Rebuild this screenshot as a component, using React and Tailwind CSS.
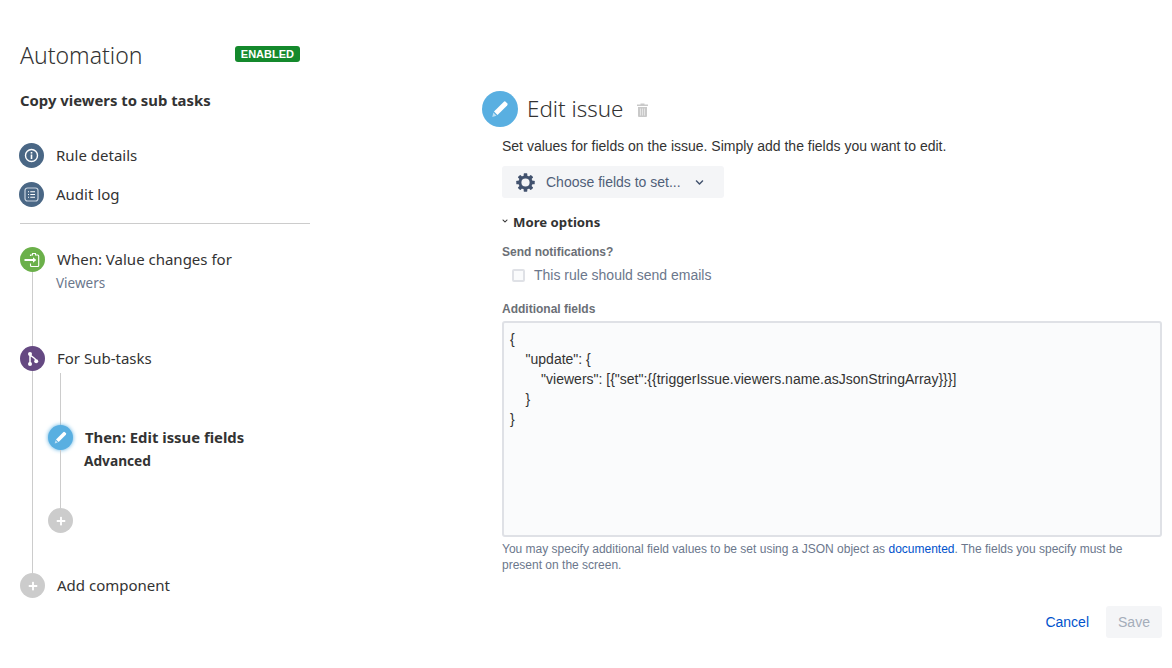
import React from 'react'
import { FaPlus, FaChevronDown } from 'react-icons/fa'

function Circle({ className, children }) {
  return (
    <div className={`w-[25px] h-[25px] rounded-full flex items-center justify-center shrink-0 text-white ${className}`}>
      {children}
    </div>
  )
}

function InfoIcon() {
  return (
    <svg width="15" height="15" viewBox="0 0 15 15" fill="none">
      <circle cx="7.5" cy="7.5" r="6" stroke="white" strokeWidth="1.4" />
      <rect x="6.7" y="6.5" width="1.6" height="4.5" fill="white" />
      <rect x="6.7" y="4" width="1.6" height="1.6" fill="white" />
    </svg>
  )
}

function LogIcon() {
  return (
    <svg width="15" height="15" viewBox="0 0 15 15" fill="none">
      <rect x="1" y="1" width="13" height="13" rx="2.5" stroke="#c9d3df" strokeWidth="1.2" />
      <path d="M4 4.8h1M6.3 4.8H11M4 7.5h1M6.3 7.5H11M4 10.2h1M6.3 10.2H11" stroke="white" strokeWidth="1.1" />
    </svg>
  )
}

function TriggerIcon() {
  return (
    <svg width="19" height="16" viewBox="0 0 19 16" fill="none">
      <path d="M7.5 4V3h2V1.5h3V3h2.2a1 1 0 0 1 1 1v9.5a1 1 0 0 1-1 1H8.5a1 1 0 0 1-1-1V11.5" stroke="white" strokeWidth="1.1" />
      <path d="M1.5 8h9" stroke="white" strokeWidth="2" />
      <path d="M10 5.2l3.3 2.8-3.3 2.8z" fill="white" />
    </svg>
  )
}

function BranchIcon() {
  return (
    <svg width="15" height="16" viewBox="0 0 15 16" fill="none">
      <path d="M5 3v10M5 3c0 3.2 5 2.5 6 6.5" stroke="white" strokeWidth="1.5" />
      <circle cx="5" cy="3" r="2" fill="white" />
      <circle cx="5" cy="13" r="2" fill="white" />
      <circle cx="11.2" cy="10.2" r="2" fill="white" />
    </svg>
  )
}

function PencilIcon({ size }) {
  return (
    <svg width={size} height={size} viewBox="0 0 16 16">
      <path d="M10.9 2.3a1.3 1.3 0 0 1 1.8 0l1 1a1.3 1.3 0 0 1 0 1.8L6 12.8 3.2 10z" fill="white" />
      <path d="M2.7 10.8l2.5 2.5-3.4 1z" fill="white" opacity="0.6" />
    </svg>
  )
}

function TrashIcon() {
  return (
    <svg width="13" height="14" viewBox="0 0 13 14">
      <path d="M4.5 1.5V.5h4v1h3.5V3H1V1.5z" fill="#c9c9c9" />
      <path d="M2 4h9v9a1 1 0 0 1-1 1H3a1 1 0 0 1-1-1z" fill="#c9c9c9" />
      <path d="M4.5 5.5v7M6.5 5.5v7M8.5 5.5v7" stroke="#e8e8e8" strokeWidth="0.9" />
    </svg>
  )
}

function GearIcon() {
  return (
    <svg width="19" height="19" viewBox="0 0 19 19" fill="none">
      <circle cx="9.5" cy="9.5" r="5.6" stroke="#42526e" strokeWidth="3" />
      {[0, 45, 90, 135, 180, 225, 270, 315].map((a) => (
        <rect key={a} x="7.7" y="0.3" width="3.6" height="3.4" rx="0.6" fill="#42526e" transform={`rotate(${a} 9.5 9.5)`} />
      ))}
    </svg>
  )
}

export default function App() {
  return (
    <div className="w-[1172px] h-[668px] bg-white flex overflow-hidden font-['Noto_Sans',sans-serif] text-[#333333]">
      {/* sidebar */}
      <div className="w-[482px] shrink-0 pl-5 pt-[40px]">
        <div className="w-[280px] flex items-center justify-between">
          <h1 className="text-[23px] leading-[30px] font-light text-[#333333]">Automation</h1>
          <span className="mb-[3px] h-4 px-[6px] rounded-[3px] bg-[#14892c] text-white text-[11px] leading-4 font-bold font-['Liberation_Sans',sans-serif]">ENABLED</span>
        </div>
        <div className="mt-[20px] text-[14.85px] leading-5 font-bold">Copy viewers to sub tasks</div>

        <div className="mt-[33px] w-[290px] border-b border-[#cccccc] pb-[16px] flex flex-col gap-[14px]">
          <div className="flex items-center gap-3 -ml-px">
            <Circle className="bg-[#4a6785]"><InfoIcon /></Circle>
            <span className="text-[15px] leading-[25px]">Rule details</span>
          </div>
          <div className="flex items-center gap-3 -ml-px">
            <Circle className="bg-[#4a6785]"><LogIcon /></Circle>
            <span className="text-[15px] leading-[25px]">Audit log</span>
          </div>
        </div>

        {/* timeline */}
        <div className="mt-[23px]">
          <div className="flex h-[99px]">
            <div className="w-[25px] flex flex-col items-center">
              <Circle className="bg-[#6bb04a]"><TriggerIcon /></Circle>
              <div className="w-px flex-1 bg-[#cccccc]" />
            </div>
            <div className="pl-3">
              <div className="text-[15px] leading-[25px]">When: Value changes for</div>
              <div className="mt-[1px] -ml-px text-[13.5px] leading-5 text-[#6b778c]">Viewers</div>
            </div>
          </div>

          <div className="flex h-[227px]">
            <div className="w-[25px] flex flex-col items-center">
              <Circle className="bg-[#654982]"><BranchIcon /></Circle>
              <div className="w-px flex-1 bg-[#cccccc]" />
            </div>
            <div>
              <div className="pl-3 text-[15px] leading-[25px]">For Sub-tasks</div>
              <div className="flex pl-[3px] pt-[2px]">
                <div className="w-[25px] flex flex-col items-center">
                  <div className="w-px h-[52px] bg-[#cccccc]" />
                  <Circle className="bg-[#59afe1] shadow-[0_0_4px_#59afe1]"><PencilIcon size={15} /></Circle>
                  <div className="w-px h-[58px] bg-[#cccccc]" />
                  <Circle className="bg-[#cccccc]"><FaPlus size={10} /></Circle>
                </div>
                <div className="pl-3 pt-[52px]">
                  <div className="text-[14.85px] leading-[25px] font-bold">Then: Edit issue fields</div>
                  <div className="-ml-px text-[13.7px] leading-5 font-bold mt-[1px]">Advanced</div>
                </div>
              </div>
            </div>
          </div>

          <div className="flex items-center">
            <Circle className="bg-[#cccccc]"><FaPlus size={10} /></Circle>
            <span className="pl-3 text-[15px] leading-[25px]">Add component</span>
          </div>
        </div>
      </div>

      {/* edit panel */}
      <div className="flex-1 pt-[91px] pr-[10px] font-['Liberation_Sans',sans-serif] text-[14px]">
        <div className="flex items-center">
          <div className="w-9 h-9 rounded-full bg-[#59afe1] flex items-center justify-center"><PencilIcon size={20} /></div>
          <h2 className="ml-[9px] font-['Noto_Sans',sans-serif] text-[22.4px] leading-9 font-light text-[#333333]">Edit issue</h2>
          <div className="ml-[13px] mt-[2px]"><TrashIcon /></div>
        </div>

        <div className="pl-5">
          <p className="mt-[9px] leading-5 text-[#333333]">Set values for fields on the issue. Simply add the fields you want to edit.</p>
          <button type="button" className="mt-[10px] w-[222px] h-8 rounded-[3px] bg-[#f4f5f7] flex items-center text-[#505f79]">
            <div className="ml-[14px]"><GearIcon /></div>
            <span className="ml-[11px]">Choose fields to set...</span>
            <FaChevronDown size={9} className="ml-[14px] text-[#42526e]" />
          </button>

          <div className="mt-[14px] flex items-center font-bold text-[#333333] font-['Noto_Sans',sans-serif] text-[13.2px] leading-5">
            <FaChevronDown size={6} className="mr-[5px] mb-[3px]" />
            More options
          </div>

          <div className="mt-[12px] text-xs leading-4 font-bold text-[#6b6f76]">Send notifications?</div>
          <label className="mt-[5px] ml-[10px] flex items-center text-[#6b778c]">
            <span className="w-[13px] h-[13px] rounded-[2px] border-2 border-[#dfe1e6] bg-[#fafbfc]" />
            <span className="ml-[9px] leading-5">This rule should send emails</span>
          </label>

          <div className="mt-[16px] text-xs leading-4 font-bold text-[#6b6f76]">Additional fields</div>
          <div className="mt-[4px] h-[216px] border-2 border-[#dfe1e6] rounded-[3px] bg-[#fafbfc] pl-[6px] pt-[6px] leading-5 whitespace-pre text-[#333333]">{`{
    "update": {
        "viewers": [{"set":{{triggerIssue.viewers.name.asJsonStringArray}}}]
    }
}`}</div>
          <p className="mt-[4px] text-xs leading-4 text-[#6b778c]">
            You may specify additional field values to be set using a JSON object as <a className="text-[#0052cc]">documented</a>. The fields you specify must be present on the screen.
          </p>

          <div className="mt-[33px] flex justify-end items-center">
            <a className="text-[#0052cc]">Cancel</a>
            <button type="button" className="ml-[17px] w-14 h-8 rounded-[3px] bg-[#f4f5f7] text-[#a5adba]">Save</button>
          </div>
        </div>
      </div>
    </div>
  )
}
